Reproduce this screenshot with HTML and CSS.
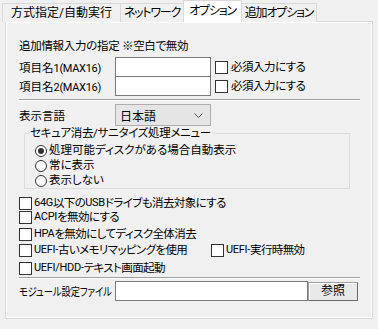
FILE: index.html
```html
<!DOCTYPE html>
<html lang="ja">
<head>
    <meta charset="UTF-8">
    <title>オプション</title>
    <link rel="stylesheet" href="styles.css">
</head>
<body>
    <div class="tabs">
        <div class="tab tab-1">方式指定/自動実行</div>
        <div class="tab tab-2">ネットワーク</div>
        <div class="tab tab-3 active">オプション</div>
        <div class="tab tab-4">追加オプション</div>
    </div>

    <div class="panel">
        <div class="title">追加情報入力の指定 ※空白で無効</div>

        <div class="field-row">
            <span class="label">項目名<span class="en">1(MAX16)</span></span>
            <span class="textbox"></span>
            <label class="check check-near"><span class="box"></span>必須入力にする</label>
        </div>
        <div class="field-row second">
            <span class="label">項目名<span class="en">2(MAX16)</span></span>
            <span class="textbox"></span>
            <label class="check check-near"><span class="box"></span>必須入力にする</label>
        </div>

        <div class="sep sep-1"></div>

        <div class="lang-row">
            <span class="label">表示言語</span>
            <div class="combo">
                <span>日本語</span>
                <svg width="9" height="5" viewBox="0 0 9 5"><path d="M0.5 0.5 L4.5 4.5 L8.5 0.5" fill="none" stroke="#555" stroke-width="1"/></svg>
            </div>
        </div>

        <div class="group">
            <span class="group-title">セキュア消去/サニタイズ処理メニュー</span>
            <div class="radio-row"><span class="radio on"></span>処理可能ディスクがある場合自動表示</div>
            <div class="radio-row"><span class="radio"></span>常に表示</div>
            <div class="radio-row"><span class="radio"></span>表示しない</div>
        </div>

        <div class="checks">
            <label class="check row-1"><span class="box"></span><span class="en">64G</span>以下の<span class="en">USB</span>ドライブも消去対象にする</label>
            <label class="check row-2"><span class="box"></span><span class="en">ACPI</span>を無効にする</label>
            <label class="check row-3"><span class="box"></span><span class="en">HPA</span>を無効にしてディスク全体消去</label>
            <div class="check-pair row-4">
                <label class="check"><span class="box"></span><span class="en">UEFI-</span>古いメモリマッピングを使用</label>
                <label class="check"><span class="box"></span><span class="en">UEFI-</span>実行時無効</label>
            </div>
            <label class="check row-5"><span class="box"></span><span class="en">UEFI/HDD-</span>テキスト画面起動</label>
        </div>

        <div class="sep sep-2"></div>

        <div class="file-row">
            <span class="label"><span class="squeeze">モジュール設定ファイル</span></span>
            <span class="textbox wide"></span>
            <button class="browse">参照</button>
        </div>
    </div>
</body>
</html>
```

FILE: styles.css
```css
body {
    margin: 0;
    width: 378px;
    height: 329px;
    background-color: #f0f0f0;
    font-family: Roboto, "Noto Sans CJK JP", sans-serif;
    font-size: 11.5px;
    font-feature-settings: "palt";
    color: #000;
    overflow: hidden;
}
.en {
    font-size: 11px;
    letter-spacing: -0.3px;
}

/* tab strip */
.tabs {
    display: flex;
    align-items: flex-end;
    height: 22px;
    padding-left: 2px;
    margin-bottom: -1px;
    position: relative;
    z-index: 1;
}
.tab {
    box-sizing: border-box;
    height: 19px;
    border: 1px solid #d9d9d9;
    border-bottom: none;
    margin-left: -1px;
    font-size: 12px;
    line-height: 18px;
    letter-spacing: -1.2px;
    text-align: center;
    white-space: nowrap;
    background-color: #f0f0f0;
}
.tab-1 { width: 119px; margin-left: 0; letter-spacing: 0; }
.tab-2 { width: 64px; }
.tab-3 { width: 59px; }
.tab-4 { width: 76px; }
.tab.active {
    height: 22px;
    line-height: 20px;
    background-color: #fff;
    position: relative;
    z-index: 2;
}

/* panel */
.panel {
    box-sizing: border-box;
    margin-left: 5px;
    width: 368px;
    height: 298px;
    border: 1px solid #d9d9d9;
    box-shadow: inset 0 0 0 1px #fff;
    padding: 0 12px 0 13px;
}
.title {
    margin-top: 17px;
    height: 14px;
    line-height: 14px;
    letter-spacing: -0.3px;
}
.label {
    display: inline-block;
    width: 96px;
    flex-shrink: 0;
    white-space: nowrap;
}
.squeeze {
    display: inline-block;
    transform: scaleX(0.8);
    transform-origin: left center;
}

.field-row {
    display: flex;
    align-items: center;
    height: 20px;
    margin-top: 4px;
}
.field-row.second {
    margin-top: -1px;
}
.textbox {
    box-sizing: border-box;
    display: block;
    width: 96px;
    height: 20px;
    background-color: #fff;
    border: 1px solid #7a7a7a;
}

.check {
    display: flex;
    align-items: center;
    height: 14px;
    line-height: 14px;
    white-space: nowrap;
}
.box {
    box-sizing: border-box;
    width: 13px;
    height: 13px;
    border: 1px solid #333;
    background-color: #fff;
    margin-right: 2px;
    flex-shrink: 0;
}
.check-near {
    margin-left: 4px;
    letter-spacing: -0.5px;
}
.check-near .box {
    margin-right: 3px;
}

.sep {
    height: 1px;
    background-color: #a0a0a0;
    border-bottom: 1px solid #fff;
    width: 341px;
}
.sep-1 { margin-top: 3px; }
.sep-2 { margin-top: 2px; }

.lang-row {
    display: flex;
    align-items: center;
    height: 22px;
    margin-top: 3px;
}
.combo {
    box-sizing: border-box;
    width: 96px;
    height: 22px;
    background-color: #e5e5e5;
    border: 1px solid #adadad;
    display: flex;
    align-items: center;
    justify-content: space-between;
    padding: 0 7px 0 4px;
    font-size: 12px;
}
.combo svg {
    display: block;
}

/* group box */
.group {
    box-sizing: border-box;
    position: relative;
    margin: 7px 0 0 5px;
    width: 326px;
    height: 56px;
    border: 1px solid #dcdcdc;
    padding: 9px 0 0 10px;
}
.group-title {
    position: absolute;
    left: 4px;
    top: -8px;
    padding: 0 1px;
    line-height: 14px;
    letter-spacing: -0.3px;
    white-space: nowrap;
    background-color: #f0f0f0;
}
.radio-row {
    display: flex;
    align-items: center;
    height: 15px;
    line-height: 15px;
    white-space: nowrap;
}
.radio {
    box-sizing: border-box;
    width: 12px;
    height: 12px;
    border: 1px solid #333;
    border-radius: 50%;
    background-color: #fff;
    margin-right: 2px;
    position: relative;
}
.radio.on::after {
    content: "";
    position: absolute;
    left: 2px;
    top: 2px;
    width: 6px;
    height: 6px;
    border-radius: 50%;
    background-color: #333;
}

/* check list */
.checks {
    display: flex;
    flex-direction: column;
}
.checks .check {
    letter-spacing: -0.6px;
}
.row-1 { margin-top: 7px; }
.row-2 { margin-top: 0; }
.row-3 { margin-top: 3px; }
.row-4 { margin-top: 2px; }
.row-5 { margin-top: 4px; }
.check-pair {
    display: flex;
}
.check-pair .check:first-child {
    width: 192px;
}

.file-row {
    display: flex;
    align-items: center;
    height: 20px;
    margin-top: 2px;
}
.textbox.wide {
    width: 193px;
}
.browse {
    box-sizing: border-box;
    width: 50px;
    height: 19px;
    padding: 0;
    font: inherit;
    font-size: 12px;
    font-feature-settings: "palt";
    line-height: 16px;
    background-color: #e9e9e9;
    border: 1px solid;
    border-color: #a0a0a0 #696969 #696969 #a0a0a0;
    box-shadow: inset 1px 1px 0 #fff;
    color: #000;
}
```
